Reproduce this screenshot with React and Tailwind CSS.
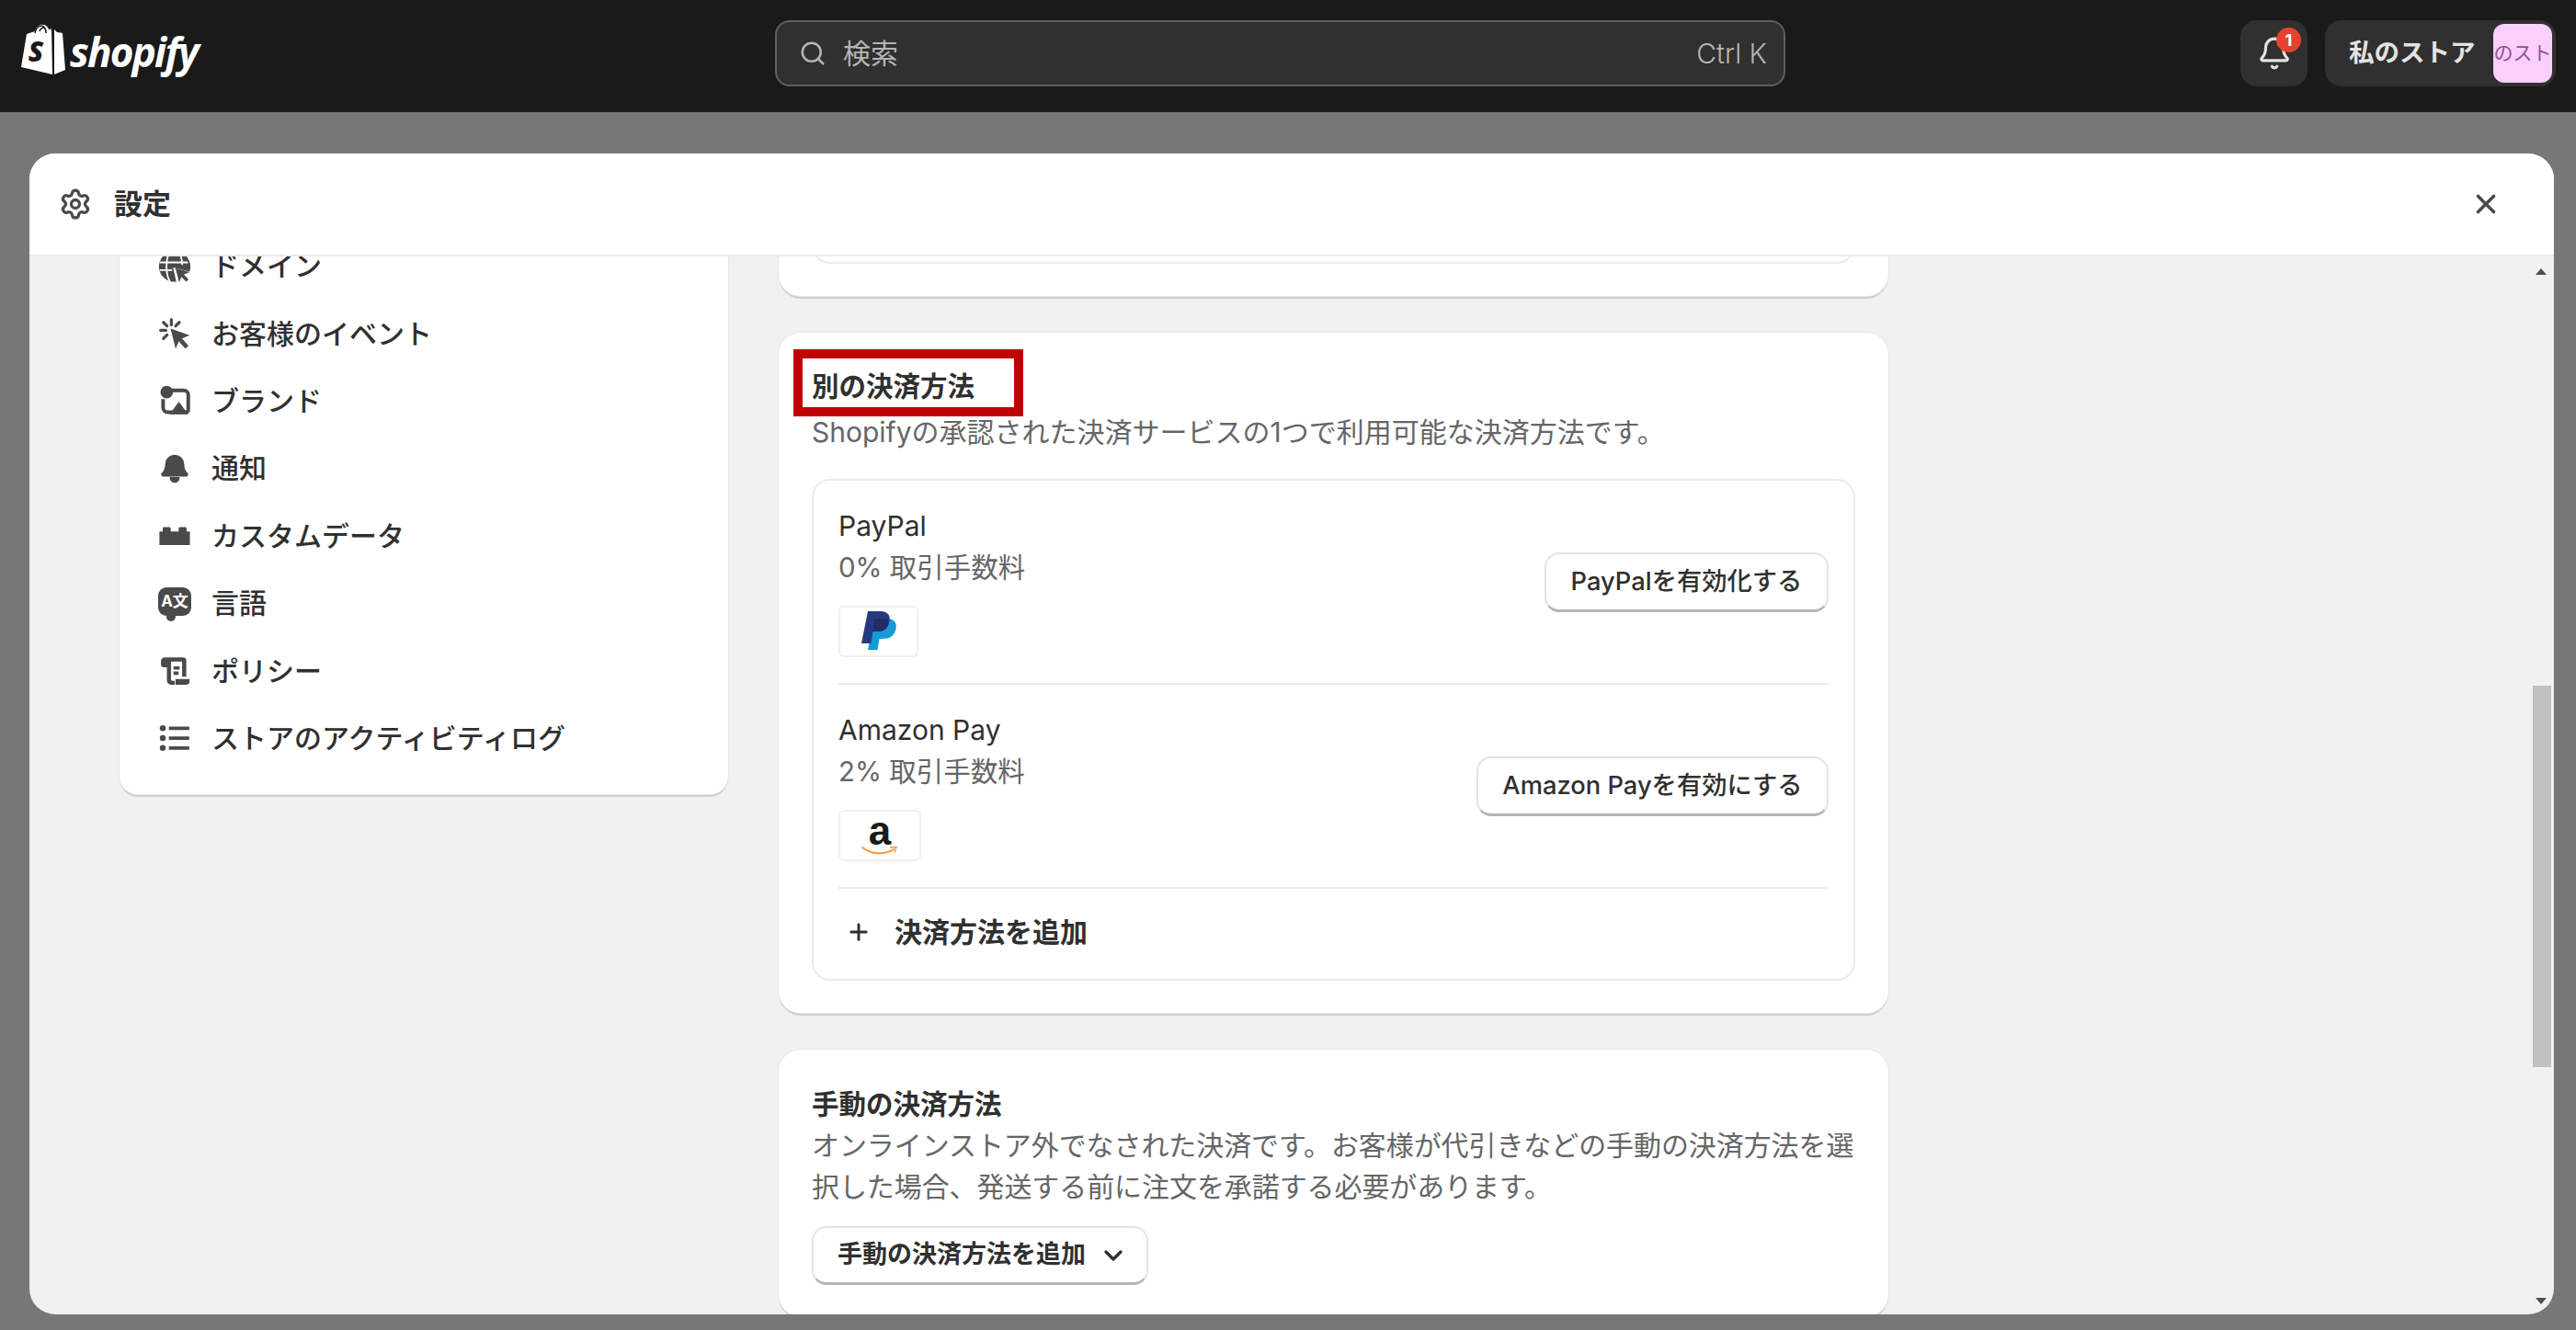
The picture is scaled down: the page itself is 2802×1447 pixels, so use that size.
import { Bell, ChevronDown, Plus, Search, Settings, X } from "lucide-react";

const font = { fontFamily: 'Inter, "Noto Sans CJK JP", sans-serif' };

function GlobeIcon() {
  return (
    <svg viewBox="0 0 20 20" className="w-[38px] h-[38px]" fill="#4a4a4a">
      <path d="M10 .8a9.200 9.200 0 1 0 1 18.300l-2-8.600 10 2.500A9.200 9.200 0 0 0 10 .8z" />
      <path d="M1 7.500h17M1 12.200h7.500M7 1c-2.600 5-2.600 13 0 18M12.500 1c1.300 2.400 2 5 2.100 8" stroke="#fff" strokeWidth="1" fill="none" />
      <path d="M10.500 11l8.500 2.300-3.400 1.500 2.800 3-1.500 1.400-2.800-3-1.400 3.400z" />
    </svg>
  );
}

function EventIcon() {
  return (
    <svg viewBox="0 0 20 20" className="w-[36px] h-[36px]" fill="#4a4a4a">
      <path d="M7.500 7l11.500 4-4.600 1.900 4 4.400-2 1.700-3.900-4.400-1.900 4.600z" />
      <path d="M8 1.500v3.200M1.500 8h3.200M3.200 3.200l2.200 2.200M3.200 13l2.200-2.200M12.800 3.200l-2.200 2.200" stroke="#4a4a4a" strokeWidth="1.800" strokeLinecap="round" />
    </svg>
  );
}

function BrandIcon() {
  return (
    <svg viewBox="0 0 20 20" className="w-[36px] h-[36px]" fill="#4a4a4a">
      <path d="M8 3.800h7.500A2.700 2.700 0 0 1 18.200 6.500v9a1.500 1.500 0 0 1-1.500 1.500H6A3 3 0 0 1 3 14V9" fill="none" stroke="#4a4a4a" strokeWidth="2.200" />
      <circle cx="5.200" cy="4.800" r="3.800" />
      <path d="M7 18.200l5.500-7.700 5.700 7.700z" />
    </svg>
  );
}

function BellFillIcon() {
  return (
    <svg viewBox="0 0 20 20" className="w-[38px] h-[38px]" fill="#4a4a4a">
      <path d="M10 1.500a5.800 5.800 0 0 0-5.800 5.800c0 2.600-.8 4-2 5.200-.8.900-.2 2.200 1 2.200h13.600c1.200 0 1.800-1.300 1-2.200-1.200-1.200-2-2.600-2-5.200A5.800 5.800 0 0 0 10 1.500z" />
      <path d="M7.500 15.500a2.500 2.500 0 0 0 5 0z" stroke="#4a4a4a" strokeWidth="1" />
    </svg>
  );
}

function BlocksIcon() {
  return (
    <svg viewBox="0 0 20 20" className="w-[38px] h-[38px]" fill="#4a4a4a">
      <path d="M.800 7.300h2V5.500a.8.800 0 0 1 .8-.8h3.200a.8.800 0 0 1 .8.800v1.800h4.800V5.500a.8.800 0 0 1 .8-.8h3.200a.8.800 0 0 1 .8.800v1.800h2v8.200H.800z" />
    </svg>
  );
}

function LanguageIcon() {
  return (
    <div className="relative w-[36px] h-[36px] flex items-start justify-center">
      <div className="w-[37px] h-[31px] rounded-[9px] bg-[#4a4a4a] flex items-center justify-center text-white text-[17px] leading-none font-bold">
        A文
      </div>
      <div className="absolute left-[9px] bottom-[-1px] w-[10px] h-[10px] rounded-full bg-[#4a4a4a]" />
    </div>
  );
}

function PolicyIcon() {
  return (
    <svg viewBox="0 0 20 20" className="w-[38px] h-[38px]" fill="#4a4a4a">
      <path d="M4 1.800h11a2 2 0 0 1 2 2v9.700h-2.500V4.300H7.800v3.500H3.500A1.800 1.800 0 0 1 1.700 6V4.100A2.300 2.300 0 0 1 4 1.800z" />
      <path d="M9.300 7.200h3.700v2H9.300zM9.300 10.300h3v2h-3zM5.300 7.500h2.500v7.500c0 .6.400 1 1 1H10v2.300H8A2.700 2.700 0 0 1 5.300 15.500z" />
      <path d="M10.500 14.800h8.500v1.500a2 2 0 0 1-2 2h-6.500z" />
    </svg>
  );
}

function ListIcon() {
  return (
    <svg viewBox="0 0 20 20" className="w-[38px] h-[38px]" fill="#4a4a4a">
      <circle cx="2.800" cy="4" r="1.800" />
      <circle cx="2.800" cy="10" r="1.800" />
      <circle cx="2.800" cy="16" r="1.800" />
      <path d="M6.500 3h12.300v2.100H6.500zM6.500 9h12.300v2.100H6.500zM6.500 15h12.300v2.100H6.500z" />
    </svg>
  );
}

const navItems = [
  { label: "ドメイン", icon: <GlobeIcon /> },
  { label: "お客様のイベント", icon: <EventIcon /> },
  { label: "ブランド", icon: <BrandIcon /> },
  { label: "通知", icon: <BellFillIcon /> },
  { label: "カスタムデータ", icon: <BlocksIcon /> },
  { label: "言語", icon: <LanguageIcon /> },
  { label: "ポリシー", icon: <PolicyIcon /> },
  { label: "ストアのアクティビティログ", icon: <ListIcon /> },
];

function ShopifyLogo() {
  return (
    <div className="flex items-center gap-[5px] text-white">
      <svg viewBox="0 0 50 56" className="w-[50px] h-[56px]">
        <path d="M2 47L8 11l9-3c2-6 6-8 9-7 3 0 5 2 6 5l3-.5L36 55z" fill="#fff" />
        <path d="M38 6l3 3 6 1 3 40-12 5z" fill="#fff" />
        <path d="M17 10c1-5 4-8 7-8 3 0 5 4 5 8M22 8c1-3 3-4 5-4" fill="none" stroke="#1a1a1a" strokeWidth="1.500" />
        <text x="18" y="41" fontSize="30" fontWeight="800" fontStyle="italic" textAnchor="middle" fill="#1a1a1a" fontFamily="Open Sans, sans-serif">S</text>
      </svg>
      <span className="text-[44px] leading-none font-bold italic tracking-[-1.800px] mt-[4px]" style={{ fontFamily: '"Open Sans", sans-serif' }}>
        shopify
      </span>
    </div>
  );
}

function PayPalLogo() {
  return (
    <svg viewBox="0 0 40 46" className="w-[40px] h-[46px]">
      <path d="M15 9h14c7 0 11 4 9.500 11-1.500 8-7 11-14 11h-4l-2 12H8z" fill="#169bd7" />
      <path d="M8 1h14c7 0 11 4 9.500 11-1.500 8-7 11-14 11h-4l-2 13H1z" fill="#253b80" />
      <path d="M15 9h14.800c1 3 .7 4.500.2 7-1.500 5.500-6 7-12.500 7h-4z" fill="#222d65" />
    </svg>
  );
}

function AmazonLogo() {
  return (
    <div className="flex flex-col items-center w-[40px]">
      <span className="text-[44px] leading-[34px] font-bold text-[#1a1a1a]" style={{ fontFamily: '"Liberation Sans", sans-serif' }}>a</span>
      <svg viewBox="0 0 40 12" className="w-[40px] h-[12px] -mt-[1px]">
        <path d="M1 2c10 8 25 8 34 2" fill="none" stroke="#f79c34" strokeWidth="2" strokeLinecap="round" />
        <path d="M31 2l7-.5-2 6" fill="none" stroke="#f79c34" strokeWidth="1.500" />
      </svg>
    </div>
  );
}

function PaymentRow({ name, fee, logo, logoWidth, button, buttonWidth }) {
  return (
    <div className="flex items-start justify-between h-[222px] pt-[27px] border-b-2 border-[#ebebeb]">
      <div className="flex flex-col">
        <div className="text-[30px] leading-[45px] text-[#303030]">{name}</div>
        <div className="text-[29.500px] leading-[45px] text-[#666666]">{fee}</div>
        <div className={`${logoWidth} h-[56px] mt-[19px] border-2 border-[#f0f0f0] rounded-[6px] flex items-center justify-center`}>
          {logo}
        </div>
      </div>
      <button className={`${buttonWidth} h-[65px] mt-[51px] rounded-[16px] border-2 border-[#e3e3e3] border-b-[3px] border-b-[#b5b5b5] bg-white text-[27.300px] font-medium text-[#303030]`}>
        {button}
      </button>
    </div>
  );
}

export default function App() {
  return (
    <div className="w-[2802px] h-[1447px] overflow-hidden flex flex-col bg-[#777777]" style={font}>
      {/* top bar */}
      <header className="relative h-[122px] shrink-0 bg-[#1a1a1a] flex items-center pb-[6px]">
        <div className="absolute left-[21px] top-[26px]">
          <ShopifyLogo />
        </div>
        <div className="ml-[843px] w-[1099px] h-[72px] rounded-[16px] bg-[#303030] border-2 border-[#5f5f5f] flex items-center pl-[24px] pr-[18px] text-[#b5b5b5]">
          <Search size={30} strokeWidth={2} />
          <span className="ml-[18px] text-[30px]">検索</span>
          <span className="ml-auto text-[30px] font-light">Ctrl K</span>
        </div>
        <div className="ml-[495px] w-[73px] h-[72px] rounded-[18px] bg-[#303030] relative flex items-center justify-center text-[#e3e3e3]">
          <Bell size={38} strokeWidth={2} />
          <div className="absolute left-[39px] top-[8px] w-[27px] h-[27px] rounded-full bg-[#e5432d] text-white text-[18px] font-bold flex items-center justify-center">
            1
          </div>
        </div>
        <div className="ml-[19px] w-[251px] h-[72px] rounded-[18px] bg-[#303030] flex items-center pl-[26px] pr-[4px]">
          <span className="text-[27.500px] font-bold text-[#e3e3e3] whitespace-nowrap">私のストア</span>
          <div className="ml-auto w-[64px] h-[64px] rounded-[12px] bg-[#fbcffb] overflow-hidden flex items-center justify-center">
            <span className="text-[21px] text-[#9a4a9a] whitespace-nowrap">私のストア</span>
          </div>
        </div>
      </header>

      {/* settings modal */}
      <div className="flex-1 pt-[45px] pb-[17px] pl-[32px] min-h-0">
        <div className="relative h-full w-[2746px] rounded-[28px] overflow-hidden bg-[#f1f1f1] flex flex-col">
          <div className="h-[112px] shrink-0 bg-white border-b-2 border-[#ebebeb] flex items-center pl-[32px] pr-[32px] text-[#4a4a4a]">
            <Settings size={36} strokeWidth={2.200} />
            <span className="ml-[24px] text-[31px] font-semibold text-[#303030]">設定</span>
            <X size={34} strokeWidth={2.500} className="ml-auto mr-[25px]" />
          </div>

          <div className="flex-1 min-h-0 overflow-hidden flex items-start gap-[55px] pl-[98px]">
            {/* sidebar */}
            <nav className="w-[662px] -mt-[26px] bg-white rounded-[20px] pb-[24px] shadow-[0_0_0_1px_#e8e8e8,0_3px_0_#cfcfcf]">
              {navItems.map((item) => (
                <div key={item.label} className="h-[73.400px] flex items-center pl-[42px] gap-[22px]">
                  <div className="w-[36px] flex justify-center shrink-0">{item.icon}</div>
                  <span className="text-[30px] font-medium text-[#303030] whitespace-nowrap">{item.label}</span>
                </div>
              ))}
            </nav>

            {/* main column */}
            <main className="w-[1207px] -mt-[57px] flex flex-col gap-[40px]">
              <section className="h-[100px] bg-white rounded-[24px] px-[36px] shadow-[0_0_0_1px_#e8e8e8,0_3px_0_#cfcfcf]">
                <div className="h-[65px] rounded-b-[20px] border-2 border-t-0 border-[#ebebeb]" />
              </section>

              <section className="relative h-[740px] bg-white rounded-[24px] px-[36px] pt-[36px] shadow-[0_0_0_1px_#e8e8e8,0_3px_0_#cfcfcf]">
                <div className="absolute left-[16px] top-[18px] w-[250px] h-[73px] border-[10px] border-[#c00000]" />
                <h2 className="text-[29.500px] leading-[45px] font-bold text-[#303030]">別の決済方法</h2>
                <p className="mt-[5px] text-[30px] leading-[45px] text-[#666666]">Shopifyの承認された決済サービスの1つで利用可能な決済方法です。</p>
                <div className="mt-[28px] h-[546px] rounded-[20px] border-2 border-[#ebebeb] px-[27px]">
                  <PaymentRow name="PayPal" fee="0% 取引手数料" logo={<PayPalLogo />} logoWidth="w-[87px]" button="PayPalを有効化する" buttonWidth="w-[309px]" />
                  <PaymentRow name="Amazon Pay" fee="2% 取引手数料" logo={<AmazonLogo />} logoWidth="w-[90px]" button="Amazon Payを有効にする" buttonWidth="w-[383px]" />
                  <div className="h-[98px] flex items-center pl-[8px] pb-[4px] gap-[25px] text-[#303030]">
                    <Plus size={28} strokeWidth={2.500} />
                    <span className="text-[30px] font-bold">決済方法を追加</span>
                  </div>
                </div>
              </section>

              <section className="bg-white rounded-[24px] pl-[36px] pr-[28px] pt-[37px] pb-[34px] shadow-[0_0_0_1px_#e8e8e8,0_3px_0_#cfcfcf]">
                <h2 className="text-[29.500px] leading-[45px] font-bold text-[#303030]">手動の決済方法</h2>
                <p className="tracking-[-0.080px] text-[30px] leading-[45px] text-[#666666]">オンラインストア外でなされた決済です。お客様が代引きなどの手動の決済方法を選択した場合、発送する前に注文を承諾する必要があります。</p>
                <button className="mt-[20px] w-[366px] h-[64px] rounded-[16px] border-2 border-[#e3e3e3] border-b-[3px] border-b-[#b5b5b5] bg-white flex items-center pl-[26px] gap-[14px] text-[27px] font-bold text-[#303030]">
                  手動の決済方法を追加
                  <ChevronDown size={32} strokeWidth={2.500} />
                </button>
              </section>
            </main>
          </div>

          {/* scrollbar sits over the content */}
          <div className="absolute left-[2726px] top-[125px] w-0 h-0 border-x-[6px] border-x-transparent border-b-[7px] border-b-[#505050]" />
          <div className="absolute left-[2723px] top-[579px] w-[20px] h-[415px] bg-[#c1c1c1]" />
          <div className="absolute left-[2726px] top-[1245px] w-0 h-0 border-x-[6px] border-x-transparent border-t-[7px] border-t-[#505050]" />
        </div>
      </div>
    </div>
  );
}
